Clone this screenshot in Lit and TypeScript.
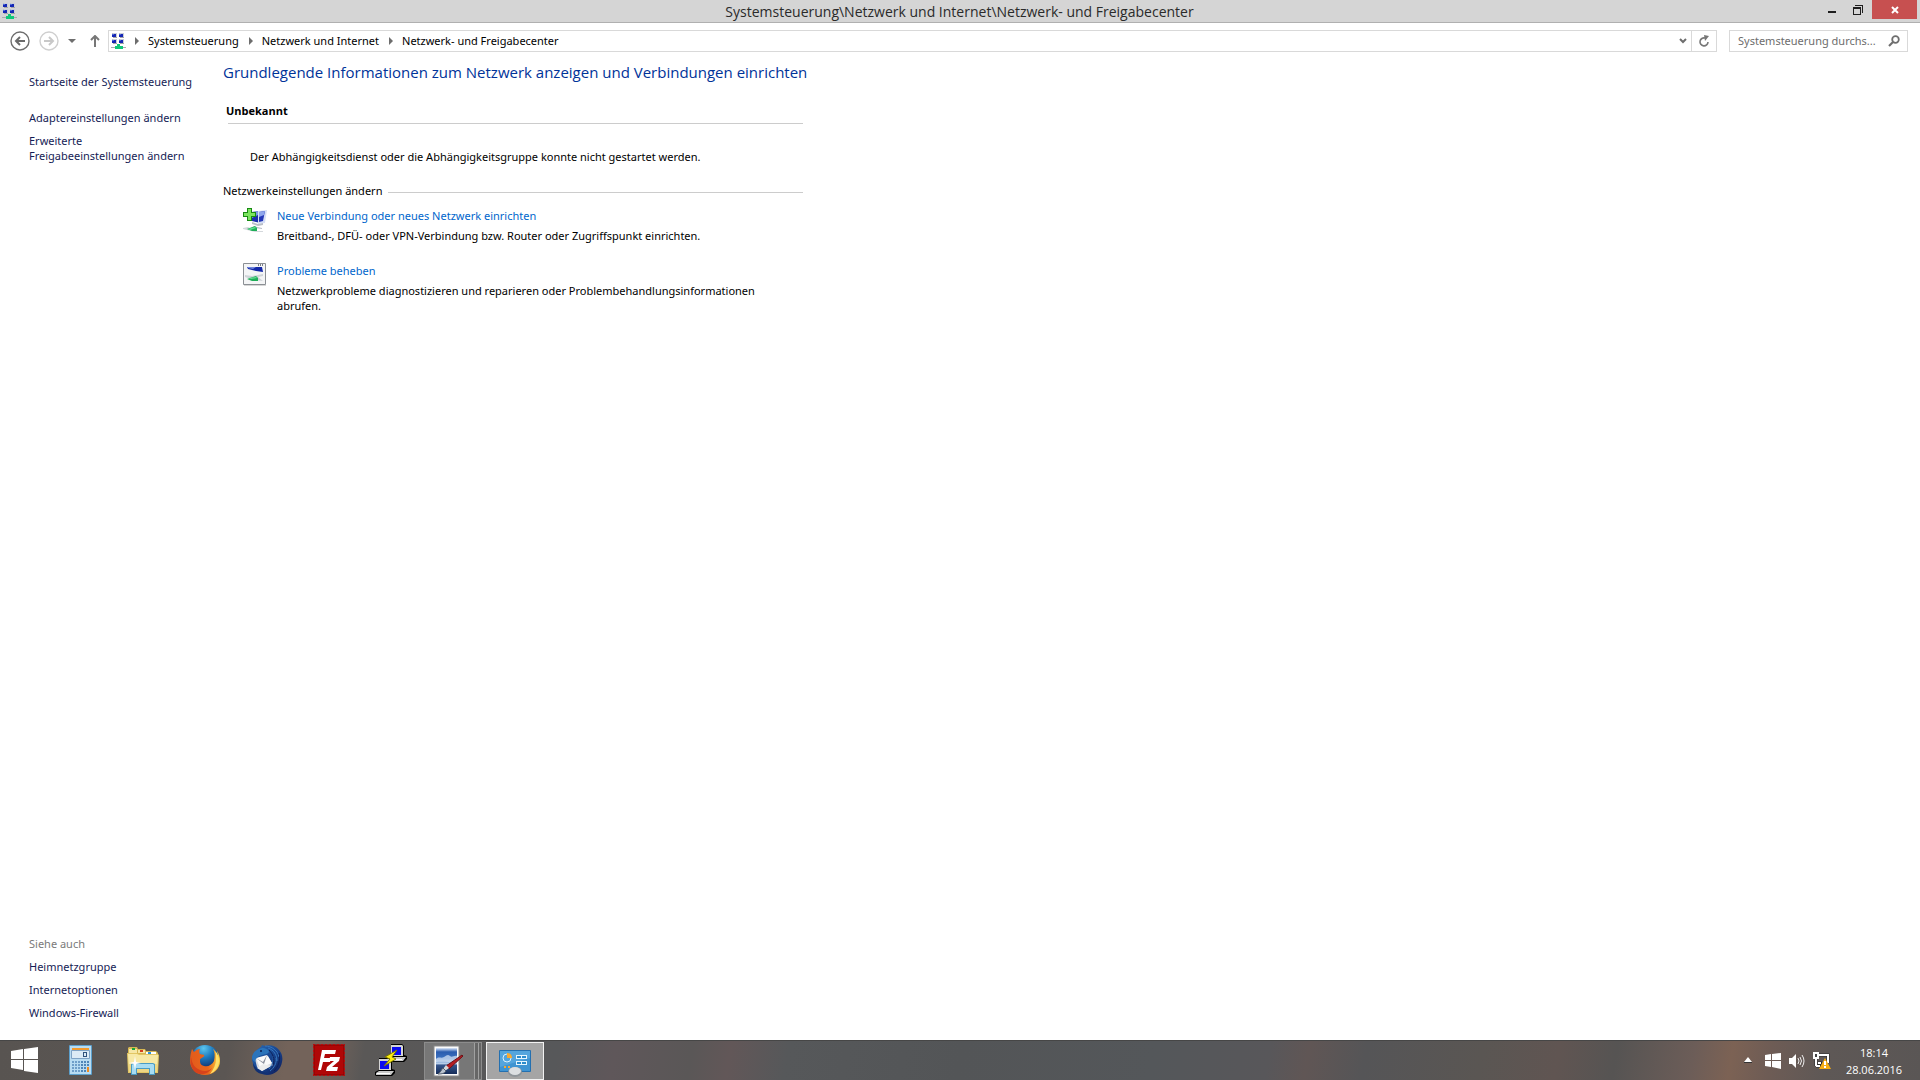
import { LitElement, html, css, svg } from "lit";
import { customElement } from "lit/decorators.js";

const networkIcon = html`<svg class="icon16" viewBox="0 0 16 16" aria-hidden="true">
  ${[[1, 0], [8, 0], [1, 6], [8, 6]].map(
    ([x, y]) => svg`<g>
      <rect x=${x} y=${y} width="5" height="4" fill="#b9bed0"/>
      <rect x=${x + 1} y=${y} width="4" height="4" fill="#c9cdd8"/>
      <rect x=${x} y=${y + 1} width="4" height="3" fill="#1526b4"/>
      <rect x=${x} y=${y + 1} width="2" height="1" fill="#4a68d8"/>
      <rect x=${x + 1} y=${y + 4} width="4" height="1" fill="#a4a4a4"/>
    </g>`
  )}
  <path d="M0 14h15v1H0z" fill="#a8adb0"/>
  <path d="M6 11h3v2h3v3H4v-3h2z" fill="#10c878"/>
</svg>`;

const newConnectionIcon = html`<svg class="icon24" viewBox="0 0 24 24" aria-hidden="true">
  <path d="M9 4l8-1v12l-8-2z" fill="#1a2fae"/>
  <path d="M9 4l8-1v3l-8 4z" fill="#7d98e6"/>
  <path d="M15 3l9-1-2 13-7 1z" fill="#d5def5"/>
  <path d="M16 4l6-1-2 10-4 1z" fill="#2438b8"/>
  <path d="M16 4l6-1-1 4-5 2z" fill="#8fa6ec"/>
  <path d="M9 14l6 2 5-1v2l-5 1-6-2z" fill="#b9bfc8"/>
  <path d="M0 20l5-1 9 4 6 0v1l-8 0-12-3z" fill="#d4d8dc"/>
  <path d="M10 18l9 2v1l-7-1z" fill="#b9bfc8"/>
  <path d="M4 21l8-3 2 2 0 3-5 0z" fill="#1fae58"/>
  <path d="M5 21l7-2 1 1-6 2z" fill="#66e095"/>
  <path d="M4 0h5v4h4v5H9v4H4V9H0V4h4z" fill="#178a12"/>
  <path d="M5 1h3v4h4v3H8v4H5V8H1V5h4z" fill="#7be45e"/>
</svg>`;

const troubleshootIcon = html`<svg class="icon24" viewBox="0 0 24 24" aria-hidden="true">
  <rect x="1" y="22" width="22" height="1" fill="#d7d7d7"/>
  <rect x="0" y="0" width="23" height="22" rx="1" fill="#8b8f94"/>
  <rect x="1" y="1" width="21" height="20" fill="#f4f5f6"/>
  <path d="M15 1h1v2h-1zM17 1h1v2h-1zM19 1h1v2h-1z" fill="#7b8088"/>
  <path d="M4 4h15l1 5-7-1-8-2z" fill="#1428a8"/>
  <path d="M4 4h9l-3 2-5-1z" fill="#6f86dd"/>
  <path d="M2 12l7 1 11-2v2l-5 1 5 4-9-1-9-3z" fill="#cfd4d8"/>
  <path d="M4 16l9-3 2 2 0 3-6 0z" fill="#1fae58"/>
  <path d="M6 15l7-1 1 1-6 1z" fill="#68dd96"/>
</svg>`;

const startIcon = html`<svg width="28" height="28" viewBox="0 0 28 28" aria-hidden="true">
  <path d="M0 5l12-2v10H0zM13 3l14-2v12H13zM0 14h12v10L0 22zM13 14h14v13l-14-2z" fill="#fff"/>
</svg>`;

const calculatorIcon = html`<svg width="32" height="32" viewBox="0 0 32 32" aria-hidden="true">
  <rect x="4" y="1" width="23" height="30" rx="1" fill="#5b9fcc"/>
  <rect x="5" y="2" width="21" height="28" fill="#b8dcf2"/>
  <rect x="7" y="4" width="17" height="2" fill="#f29a2e"/>
  <rect x="6" y="6" width="19" height="9" rx="1" fill="#7fa3c6"/>
  <rect x="7" y="7" width="17" height="7" fill="#dcebf6"/>
  <path d="M18 8h4v5h-4zM19 9v3h2V9z" fill="#30527c" fill-rule="evenodd"/>
  ${[17, 20, 23, 26].map((y) =>
    [7, 10, 13, 16, 19, 22].map(
      (x) => svg`<rect x=${x} y=${y} width="2" height="2" fill=${x > 15 ? "#4f86b8" : "#6f9fc9"}/>`
    )
  )}
  <rect x="22" y="23" width="2" height="5" fill="#f08b1e"/>
</svg>`;

const explorerIcon = html`<svg width="32" height="32" viewBox="0 0 32 32" aria-hidden="true">
  <path d="M1 4l1-1h8l1 2h7l1 2h10l2 2v19H1z" fill="#d6b752"/>
  <path d="M2 5h8v4H2zM11 6h7v3h-7z" fill="#f6e7a4"/>
  <path d="M19 8h10v3H19z" fill="#fff"/>
  <rect x="5" y="4" width="3" height="2" fill="#19a63a"/>
  <rect x="13" y="6" width="3" height="2" fill="#d6401e"/>
  <rect x="21" y="8" width="3" height="2" fill="#2694dc"/>
  <path d="M0 9h10l2 1h19l1 1-1 18H1z" fill="#e2c664"/>
  <path d="M1 10h9l2 1h19l-1 16H2z" fill="#f7e9a6"/>
  <path d="M2 20h28v8H2z" fill="#eed684"/>
  <path d="M4 31V20l2-1h20l2 1v11h-6v-6H10v6z" fill="#4a9cc4"/>
  <path d="M5 30v-9l1-1h20l1 1v9h-4v-6H9v6z" fill="#a7dcf2"/>
  <path d="M8 12l1 6 5 1-5 1-1 6-1-6-5-1 5-1z" fill="#fff"/>
</svg>`;

const firefoxIcon = html`<svg width="32" height="32" viewBox="0 0 32 32" aria-hidden="true">
  <defs>
    <radialGradient id="ffBlue" cx="45%" cy="12%" r="70%">
      <stop offset="0" stop-color="#5cc6ee"/><stop offset="0.5" stop-color="#1b77bd"/><stop offset="1" stop-color="#12346e"/>
    </radialGradient>
    <linearGradient id="ffFox" x1="0" y1="0" x2="1" y2="0">
      <stop offset="0" stop-color="#e35b1c"/><stop offset="0.6" stop-color="#e8661b"/><stop offset="1" stop-color="#fbd23c"/>
    </linearGradient>
  </defs>
  <circle cx="16" cy="15" r="14" fill="url(#ffBlue)"/>
  <path d="M3 5c1 1 1 2 2 3 2-2 4-3 6-3-1 2-1 4 0 5 2 1 5 0 4 2-1 2-4 2-4 4 0 2 0 5 4 6 4 1 8-1 10-5 1-5 1-9-1-12 4 3 4 6 5 8 0-3-1-5-1-6 2 3 3 6 3 10 0 8-7 14-15 14S1 25 1 17C1 12 2 8 3 5z" fill="url(#ffFox)"/>
  <path d="M26 7c3 3 4 6 4 10 0 6-4 11-9 13 4-5 6-10 6-15 0-4 0-6-1-8z" fill="#fde06a"/>
  <path d="M2 13c1 5 2 10 9 13 5 2 9 1 12-2-3 6-12 8-17 4-4-4-5-9-4-15z" fill="#d6431b"/>
</svg>`;

const thunderbirdIcon = html`<svg width="32" height="32" viewBox="0 0 32 32" aria-hidden="true">
  <defs><linearGradient id="tbBlue" x1="0" y1="0" x2="1" y2="1">
    <stop offset="0" stop-color="#2a6eb8"/><stop offset="0.5" stop-color="#184590"/><stop offset="1" stop-color="#0e1a55"/>
  </linearGradient></defs>
  <path d="M4 8C7 5 8 4 10 3l1-2 3 1c5-2 11 0 14 4 3 3 4 8 3 12-1 7-7 13-15 13C8 30 2 25 2 19c-2-4-1-7 2-11z" fill="url(#tbBlue)"/>
  <path d="M4 15l13-3 5 9-11 6-5-4z" fill="#d9dade"/>
  <path d="M5 14l11-3 5 8-12 5z" fill="#fafafa"/>
  <path d="M5 14l7 4 4-7-3 9z" fill="#8b919d"/>
  <path d="M6 24l6-4 8 2-9 5z" fill="#eceded"/>
  <path d="M1 13c1-5 5-8 10-9 4 0 7 2 7 4-1 2-4 2-7 3-4 1-6 3-7 7-2-1-3-3-3-5z" fill="#2b74ba"/>
  <path d="M17 4c6 2 9 7 9 13M14 2c7 0 13 5 14 11M22 12c1 5-1 9-4 13M25 14c1 5-2 10-6 13" fill="none" stroke="#3576bd"/>
  <path d="M18 6c4 4 6 9 4 15M28 9c2 7-1 14-5 18" fill="none" stroke="#0c2058"/>
  <circle cx="10" cy="7" r="1" fill="#0c1d4c"/>
  <path d="M2 19c2 5 7 9 14 10-7 3-14-2-14-10z" fill="#123070"/>
</svg>`;

const fileZillaIcon = html`<svg width="32" height="32" viewBox="0 0 32 32" aria-hidden="true">
  <rect x="1" y="1" width="30" height="30" fill="#b00707" stroke="#8c0000"/>
  <rect x="0" y="0" width="32" height="32" fill="none" stroke="#b90c0c" stroke-width="2" stroke-dasharray="2 2"/>
  <path d="M9 6h14l-1 4h-10l-1 4h7l-1 4h-7l-2 8H5z" fill="#fff"/>
  <path d="M17 13h10l-1 4-7 6h6l-1 4H13l1-4 7-6h-5z" fill="#fff"/>
</svg>`;

const puttyComputer = (x: number, y: number) => svg`<g transform="translate(${x} ${y})">
  <path d="M4 0h11l2 2v9l3 1v3l-3 3H1l-1-1v-3l4-2z" fill="#000"/>
  <path d="M4 1h11l1 1v10H4z" fill="#d4d4d4"/>
  <path d="M5 3h9v8H5z" fill="#0a0af0"/>
  <path d="M1 15l3-2h15l-3 4H1z" fill="#c9c9c9"/>
  <path d="M2 15h13v1H2z" fill="#fff"/>
</g>`;

const puttyIcon = html`<svg width="32" height="32" viewBox="0 0 32 32" aria-hidden="true">
  ${puttyComputer(12, 0)}${puttyComputer(0, 14)}
  <path d="M22 6l-12 7 5 2-6 7 12-7-4-2z" fill="#ffee12" stroke="#7c7800" stroke-width="1"/>
</svg>`;

const paintIcon = html`<svg width="32" height="32" viewBox="0 0 32 32" aria-hidden="true">
  <defs><linearGradient id="sky" x1="0" y1="0" x2="0" y2="1">
    <stop offset="0" stop-color="#dfeafa"/><stop offset="0.15" stop-color="#2a5cae"/><stop offset="0.4" stop-color="#3d72c0"/><stop offset="0.6" stop-color="#b9cfea"/><stop offset="0.66" stop-color="#35558c"/><stop offset="1" stop-color="#152c58"/>
  </linearGradient></defs>
  <rect x="1" y="1" width="25" height="30" fill="#fbfbfb" stroke="#8b8b8b"/>
  <rect x="3" y="3" width="21" height="26" fill="url(#sky)"/>
  <path d="M3 14c3-3 5 0 8-2s4-3 6-1 4-1 7 0v5c-7 2-14 0-21 1z" fill="#dce7f5" opacity="0.7"/>
  <path d="M29 10l1 1-14 13-3-3z" fill="#b51d24" stroke="#6d1216" stroke-width="1"/>
  <path d="M13 20l3 3-4 3-2-2z" fill="#d5d8dc"/>
  <path d="M10 23l3 3c-2 3-5 3-8 3 3-2 3-4 5-6z" fill="#b9c3d0" stroke="#56606e" stroke-width="1"/>
</svg>`;

const controlPanelIcon = html`<svg width="32" height="32" viewBox="0 0 32 32" aria-hidden="true">
  <rect x="0" y="5" width="32" height="22" rx="1" fill="#2470b0"/>
  <rect x="1" y="6" width="30" height="20" fill="#3f94d2"/>
  <path d="M1 6h30v7L1 22z" fill="#62b0e4" opacity="0.6"/>
  <circle cx="8" cy="13" r="4" fill="none" stroke="#d9f0fc" stroke-width="1"/>
  <path d="M8 8c3 0 5 2 5 5H8z" fill="#f9a930"/>
  <path d="M17 10h11v4H17zM17 16h11v4H17z" fill="#e6f5fd"/>
  <path d="M18 11h4v2h-4zM23 11h4v2h-4zM18 17h4v2h-4zM23 17h4v2h-4z" fill="#2b8bcc"/>
  <rect x="5" y="21" width="2" height="2" fill="#f9a930"/>
  <rect x="9" y="21" width="2" height="2" fill="#f9a930"/>
  <ellipse cx="16" cy="27" rx="7" ry="5" fill="#8f959a"/>
  <ellipse cx="16" cy="26" rx="6" ry="4" fill="#dcdfe2"/>
</svg>`;

const sidebarTasks = ["Adaptereinstellungen ändern", "Erweiterte Freigabeeinstellungen ändern"];
const seeAlso = ["Heimnetzgruppe", "Internetoptionen", "Windows-Firewall"];
const breadcrumbs = ["Systemsteuerung", "Netzwerk und Internet", "Netzwerk- und Freigabecenter"];

const actions = [
  {
    icon: newConnectionIcon,
    title: "Neue Verbindung oder neues Netzwerk einrichten",
    text: "Breitband-, DFÜ- oder VPN-Verbindung bzw. Router oder Zugriffspunkt einrichten.",
  },
  {
    icon: troubleshootIcon,
    title: "Probleme beheben",
    text: "Netzwerkprobleme diagnostizieren und reparieren oder Problembehandlungsinformationen abrufen.",
  },
];

const pinned = [
  { label: "Rechner", icon: calculatorIcon },
  { label: "Explorer", icon: explorerIcon },
  { label: "Firefox", icon: firefoxIcon },
  { label: "Thunderbird", icon: thunderbirdIcon },
  { label: "FileZilla", icon: fileZillaIcon },
  { label: "PuTTY", icon: puttyIcon },
];

const arrow = html`<svg width="5" height="8" viewBox="0 0 5 8" aria-hidden="true"><path d="M0 0l4 4-4 4z" fill="#6d6d6d"/></svg>`;

@customElement("app-root")
export class AppRoot extends LitElement {
  static styles = css`
    :host {
      display: flex;
      flex-direction: column;
      min-height: 100vh;
      background: #fff;
      color: #000;
      font-family: "Noto Sans", "Open Sans", sans-serif;
      font-size: 11px;
      line-height: 15px;
    }
    * { box-sizing: border-box; }
    svg { display: block; flex: none; }
    a { color: inherit; text-decoration: none; }
    a:hover { text-decoration: underline; }
    button {
      display: flex;
      align-items: center;
      justify-content: center;
      margin: 0;
      padding: 0;
      border: 0;
      background: none;
      color: inherit;
      font: inherit;
    }
    h1, h2, p, ul, ol { margin: 0; padding: 0; font: inherit; list-style: none; }
    .icon16 { width: 16px; height: 16px; }
    .icon24 { width: 24px; height: 24px; }

    .titlebar {
      display: grid;
      grid-template-columns: 1fr auto 1fr;
      height: 23px;
      padding: 0 3px 0 2px;
      background: #d5d5d5;
      border-bottom: 1px solid #b0b0b0;
    }
    .titlebar .icon16 { margin-top: 3px; }
    .titlebar h1 {
      font-family: "Open Sans", "Noto Sans", sans-serif;
      font-size: 14px;
      line-height: 23px;
      color: #2a2a2a;
    }
    .controls { display: flex; justify-content: flex-end; color: #1e1e1e; }
    .controls button { width: 26px; height: 19px; }
    .controls .close { width: 45px; margin-left: 1px; background: #c75050; color: #fff; }

    .navbar { display: flex; align-items: center; height: 36px; padding: 0 12px 0 9px; }
    .navbar > button { height: 22px; }
    .back { width: 21px; }
    .forward { width: 21px; margin-left: 8px; }
    .history { width: 20px; margin-left: 3px; }
    .up { width: 18px; margin: 0 4px; }
    .address {
      display: flex;
      flex: 1;
      align-items: center;
      height: 22px;
      border: 1px solid #d9d9d9;
      padding-left: 2px;
    }
    .crumbs { display: flex; flex: 1; align-items: center; gap: 2px; padding-bottom: 1px; }
    .crumbs li { display: flex; align-items: center; }
    .crumbs svg { margin: 0 8px; }
    .address button { height: 20px; width: 17px; }
    .address .reload { width: 25px; border-left: 1px solid #d9d9d9; }
    .search {
      display: flex;
      align-items: center;
      width: 179px;
      height: 22px;
      margin-left: 12px;
      padding: 0 7px 0 8px;
      border: 1px solid #d9d9d9;
    }
    .search input {
      flex: 1;
      min-width: 0;
      padding: 0 0 1px;
      border: 0;
      outline: 0;
      background: none;
      font: inherit;
    }
    .search input::placeholder { color: #6d6d6d; opacity: 1; }

    .body { display: flex; flex: 1; }
    .sidebar {
      display: flex;
      flex-direction: column;
      width: 223px;
      padding: 15px 20px 20px 29px;
      color: #151c55;
    }
    .sidebar a { white-space: nowrap; }
    .sidebar .tasks a { white-space: normal; }
    .tasks { display: grid; gap: 8px; margin: 21px 8px 0 0; }
    .also { display: grid; gap: 8px; margin-top: auto; }
    .also h2 { color: #7a7a7a; }

    .content { width: 580px; padding-top: 2px; }
    .content > h2 {
      font-family: "Open Sans", "Noto Sans", sans-serif;
      font-size: 15px;
      line-height: 22px;
      color: #003399;
      white-space: nowrap;
    }
    .network {
      margin: 20px 0 0 3px;
      font-family: "Open Sans", "Noto Sans", sans-serif;
      font-weight: 700;
    }
    .rule { height: 1px; margin: 5px 0 0 5px; border: 0; background: #ccc; }
    .message { margin: 25px 0 0 27px; }
    .group { display: flex; align-items: center; gap: 6px; margin-top: 19px; }
    .group::after { content: ""; flex: 1; height: 1px; margin-top: 3px; background: #ccc; }
    .actions { display: grid; gap: 20px; margin: 10px 20px 0 20px; }
    .actions li { display: flex; gap: 10px; }
    .actions .title { display: block; margin-bottom: 5px; color: #0066cc; }

    .taskbar {
      display: flex;
      height: 40px;
      border-top: 1px solid #464646;
      color: #fff;
      background: linear-gradient(100deg,
        #585451 0%, #5b5653 12%, #73635a 15%, #73635a 17%, #5a5857 19%, #57585a 29%,
        #5f575a 32%, #5a5757 36%, #625758 38%, #56585a 41%, #535557 50%, #54575a 60%,
        #58575a 66%, #605655 68%, #555557 71%, #5a5653 77%, #605552 81%, #565453 84%,
        #6c5d58 88%, #7c6254 90%, #6e5c55 92%, #5e5856 95%, #5a5655 100%);
    }
    .taskbar button { padding-bottom: 1px; }
    .start { width: 50px; }
    .pins { display: flex; }
    .pins button { width: 62px; height: 39px; }
    .running { display: flex; margin-left: 2px; padding-top: 1px; gap: 4px; }
    .running button { height: 38px; width: 58px; border: 1px solid #8c8c8c; background: #777; }
    .running .stack {
      justify-content: flex-start;
      padding-left: 8px;
      background: linear-gradient(90deg, #777 49px, #a0a0a0 49px, #a0a0a0 50px, #666 50px, #666 53px, #a0a0a0 53px, #a0a0a0 54px, #666 54px);
    }
    .running .active { border-color: #f2f2f2; background: #a5a5a5; }
    .tray { display: flex; align-items: center; margin-left: auto; padding-right: 18px; }
    .tray .more { width: 10px; margin-right: 12px; }
    .tray .status { display: flex; align-items: center; gap: 8px; }
    .clock {
      margin-left: 15px;
      font-family: "Open Sans", "Noto Sans", sans-serif;
      font-size: 11px;
      line-height: 17px;
      text-align: center;
    }
  `;

  render() {
    return html`
      <header class="titlebar">
        ${networkIcon}
        <h1>Systemsteuerung\\Netzwerk und Internet\\Netzwerk- und Freigabecenter</h1>
        <div class="controls">
          <button aria-label="Minimieren">
            <svg width="10" height="10" viewBox="0 0 10 10"><path d="M1 6h8v2H1z" fill="currentColor"/></svg>
          </button>
          <button aria-label="Verkleinern">
            <svg width="10" height="10" viewBox="0 0 10 10"><path d="M0 2h8v8H0zM1 4v5h6V4zM2 0h8v8H9V1H2z" fill="currentColor" fill-rule="evenodd"/></svg>
          </button>
          <button class="close" aria-label="Schließen">
            <svg width="8" height="8" viewBox="0 0 8 8"><path d="M1 1l6 6M7 1L1 7" stroke="currentColor" stroke-width="2"/></svg>
          </button>
        </div>
      </header>

      <nav class="navbar" aria-label="Navigation">
        <button class="back" aria-label="Zurück">
          <svg width="20" height="20" viewBox="0 0 20 20"><circle cx="10" cy="10" r="9" fill="none" stroke="#6e6e6e" stroke-width="1.4"/><path d="M15 10H6M10 6l-4 4 4 4" fill="none" stroke="#6a6a6a" stroke-width="2"/></svg>
        </button>
        <button class="forward" aria-label="Vorwärts">
          <svg width="20" height="20" viewBox="0 0 20 20"><circle cx="10" cy="10" r="9" fill="none" stroke="#cfcfcf" stroke-width="1.4"/><path d="M5 10h9M10 6l4 4-4 4" fill="none" stroke="#c8c8c8" stroke-width="2"/></svg>
        </button>
        <button class="history" aria-label="Verlauf">
          <svg width="8" height="4" viewBox="0 0 8 4"><path d="M0 0h8L4 4z" fill="#6e6e6e"/></svg>
        </button>
        <button class="up" aria-label="Nach oben">
          <svg width="10" height="12" viewBox="0 0 10 12"><path d="M5 12V2M1 5l4-4 4 4" fill="none" stroke="#777" stroke-width="2"/></svg>
        </button>
        <div class="address">
          ${networkIcon}
          <ol class="crumbs">
            ${breadcrumbs.map((c) => html`<li>${arrow}<a href="#">${c}</a></li>`)}
          </ol>
          <button aria-label="Vorherige Orte">
            <svg width="8" height="6" viewBox="0 0 8 6"><path d="M1 1l3 3 3-3" fill="none" stroke="#6e6e6e" stroke-width="2"/></svg>
          </button>
          <button class="reload" aria-label="Aktualisieren">
            <svg width="12" height="12" viewBox="0 0 12 12"><path d="M7 3a4 4 0 1 0 3 4" fill="none" stroke="#777" stroke-width="1.6"/><path d="M6 0l5 1-4 5z" fill="#777"/></svg>
          </button>
        </div>
        <label class="search">
          <input type="text" aria-label="Suchen" placeholder="Systemsteuerung durchs..." />
          <svg width="12" height="12" viewBox="0 0 12 12"><circle cx="7.500" cy="4.500" r="3.300" fill="none" stroke="#6e6e6e" stroke-width="1.800"/><path d="M5 7l-4 4" stroke="#6e6e6e" stroke-width="2.200"/></svg>
        </label>
      </nav>

      <div class="body">
        <aside class="sidebar">
          <a href="#">Startseite der Systemsteuerung</a>
          <ul class="tasks">${sidebarTasks.map((t) => html`<li><a href="#">${t}</a></li>`)}</ul>
          <section class="also">
            <h2>Siehe auch</h2>
            ${seeAlso.map((t) => html`<a href="#">${t}</a>`)}
          </section>
        </aside>
        <main class="content">
          <h2>Grundlegende Informationen zum Netzwerk anzeigen und Verbindungen einrichten</h2>
          <p class="network">Unbekannt</p>
          <hr class="rule" />
          <p class="message">Der Abhängigkeitsdienst oder die Abhängigkeitsgruppe konnte nicht gestartet werden.</p>
          <p class="group">Netzwerkeinstellungen ändern</p>
          <ul class="actions">
            ${actions.map((a) => html`<li>${a.icon}<div><a class="title" href="#">${a.title}</a><p>${a.text}</p></div></li>`)}
          </ul>
        </main>
      </div>

      <footer class="taskbar">
        <button class="start" aria-label="Start">${startIcon}</button>
        <ul class="pins">
          ${pinned.map((p) => html`<li><button aria-label=${p.label}>${p.icon}</button></li>`)}
        </ul>
        <div class="running">
          <button class="stack" aria-label="Paint">${paintIcon}</button>
          <button class="active" aria-label="Systemsteuerung">${controlPanelIcon}</button>
        </div>
        <div class="tray">
          <button class="more" aria-label="Ausgeblendete Symbole einblenden">
            <svg width="8" height="6" viewBox="0 0 8 6"><path d="M0 5l4-5 4 5z" fill="#fff"/><path d="M0 5h8v1H0z" fill="#333"/></svg>
          </button>
          <div class="status">
            <svg width="16" height="16" viewBox="0 0 16 16" aria-hidden="true"><path d="M0 2l6-1v6H0zM7 1l9-1v7H7zM0 8h6v6l-6-1zM7 8h9v8l-9-2z" fill="#fff"/></svg>
            <svg width="16" height="16" viewBox="0 0 16 16" aria-hidden="true"><path d="M0 5h3l4-4v14l-4-4H0z" fill="#fff"/><path d="M9 5q2 3 0 6M11 4q3 4 0 8M13 2q4 6 0 12" fill="none" stroke="#eee"/></svg>
            <svg width="18" height="18" viewBox="0 0 18 18" aria-hidden="true">
              <path d="M6 3h9v8M3 6v8M3 14h5M5 11h4" fill="none" stroke="#2b2b2b" stroke-width="3"/>
              <path d="M6 3h9v8M3 6v8M3 14h4M5 11h3" fill="none" stroke="#fff" stroke-width="2"/>
              <path d="M1 1h4v5H1z" fill="#444" stroke="#fff" stroke-width="2"/>
              <path d="M12 6l6 11H6z" fill="#f6ad12"/><path d="M11 9h2v4h-2zM11 14h2v2h-2z" fill="#fff"/>
            </svg>
          </div>
          <time class="clock" datetime="2016-06-28T18:14"><div>18:14</div><div>28.06.2016</div></time>
        </div>
      </footer>
    `;
  }
}
